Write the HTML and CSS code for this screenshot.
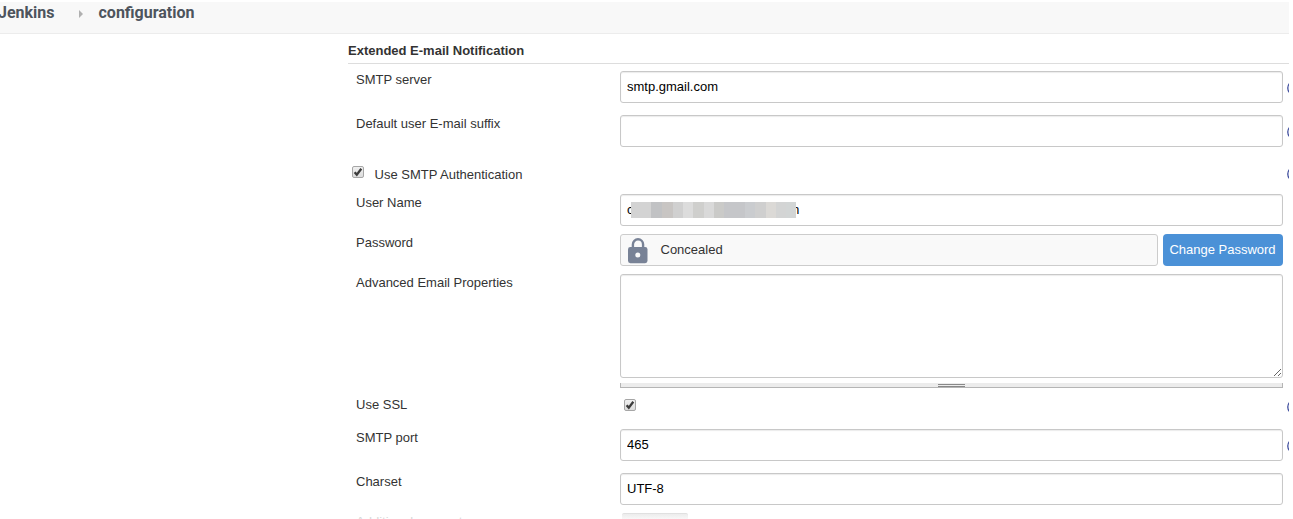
FILE: index.html
```html
<!DOCTYPE html>
<html>
<head>
    <meta charset="utf-8">
    <title>configuration [Jenkins]</title>
    <link rel="stylesheet" href="styles.css">
</head>
<body>
    <svg class="defs">
        <symbol id="help" viewBox="0 0 16 16">
            <circle cx="8" cy="8" r="7.2" fill="#fff" stroke="#3b4a9c" stroke-width="1.3"/>
            <path d="M5.8 6.2a2.2 2.2 0 1 1 3.2 2c-.8.5-1 .8-1 1.6M8 11.2v1.4" fill="none" stroke="#3b4a9c" stroke-width="1.5"/>
        </symbol>
        <symbol id="check" viewBox="0 0 12 12">
            <path d="M2.6 6.2 4.8 8.6 9.3 2.8" fill="none" stroke="#3c3c3c" stroke-width="2.3"/>
        </symbol>
    </svg>
    <div class="page">
        <div class="breadcrumbs">
            <span>Jenkins</span>
            <svg class="arrow" viewBox="0 0 4 8"><path d="M0 0 4 4 0 8z" fill="#b0b0b0"/></svg>
            <span>configuration</span>
        </div>
        <div class="form">
            <h2 class="section-header">Extended E-mail Notification</h2>
            <div class="row">
                <label class="label">SMTP server</label>
                <input class="input" type="text" value="smtp.gmail.com">
                <svg class="help"><use href="#help"/></svg>
            </div>
            <div class="row">
                <label class="label">Default user E-mail suffix</label>
                <input class="input" type="text">
                <svg class="help"><use href="#help"/></svg>
            </div>
            <div class="row auth">
                <span class="checkbox"><svg><use href="#check"/></svg></span>
                <label class="auth-label">Use SMTP Authentication</label>
                <svg class="help"><use href="#help"/></svg>
            </div>
            <div class="row short">
                <label class="label">User Name</label>
                <div class="input masked">
                    <span>c</span><span>m</span>
                    <div class="mosaic"></div>
                </div>
            </div>
            <div class="row short">
                <label class="label">Password</label>
                <div class="concealed">
                    <svg class="lock" viewBox="0 0 20 26">
                        <path d="M4.9 10V6.4a5.1 5.1 0 0 1 10.2 0V10" fill="none" stroke="#788296" stroke-width="2.4"/>
                        <rect y="9" width="19.5" height="16.2" rx="2.4" fill="#788296"/>
                        <circle cx="9.8" cy="17" r="2.5" fill="#f9f9f9"/>
                    </svg>
                    <span>Concealed</span>
                </div>
                <button class="change">Change Password</button>
            </div>
            <div class="row properties">
                <label class="label">Advanced Email Properties</label>
                <div class="area">
                    <textarea class="input"></textarea>
                    <div class="handle"><div class="grip"></div></div>
                </div>
            </div>
            <div class="row ssl">
                <label class="label">Use SSL</label>
                <span class="checkbox"><svg><use href="#check"/></svg></span>
                <svg class="help"><use href="#help"/></svg>
            </div>
            <div class="row">
                <label class="label">SMTP port</label>
                <input class="input" type="text" value="465">
                <svg class="help"><use href="#help"/></svg>
            </div>
            <div class="row short">
                <label class="label">Charset</label>
                <input class="input" type="text" value="UTF-8">
            </div>
            <div class="row faded">
                <label class="label">Additional accounts</label>
                <div class="add"></div>
            </div>
        </div>
    </div>
</body>
</html>
```
FILE: styles.css
```css
* {
    box-sizing: border-box;
}

body {
    margin: 0;
    background: #fff;
    color: #333;
    font: 13px/16px "Liberation Sans", Arial, sans-serif;
    overflow: hidden;
}

.defs {
    display: none;
}

.page {
    width: 1289px;
    height: 519px;
    padding-top: 2px;
    overflow: hidden;
}

.breadcrumbs {
    display: flex;
    height: 32px;
    padding-top: 1px;
    background: #f8f8f8;
    border-bottom: 1px solid #ececec;
    color: #4d545d;
    font: bold 16px/20px Roboto, sans-serif;
}

.breadcrumbs span:first-child {
    margin-left: -2px;
}

.arrow {
    width: 4px;
    height: 8px;
    margin: 7px 16px 0 24px;
}

.form {
    padding-left: 348px;
}

.section-header {
    height: 30px;
    margin: 0 0 7px;
    padding-top: 9px;
    border-bottom: 1px solid #ddd;
    font-size: 13px;
    line-height: 16px;
}

.row {
    display: flex;
    align-items: flex-start;
    height: 44px;
}

.short {
    height: 40px;
}

.label {
    flex: none;
    width: 272px;
    padding: 1px 0 0 8px;
}

.input {
    flex: none;
    width: 663px;
    height: 32px;
    padding: 0 6px 2px;
    background: #fff;
    border: 1px solid #c8c8c8;
    border-radius: 3px;
    box-shadow: inset 0 1px 1px rgba(0, 0, 0, 0.08);
    color: #000;
    font: 13px "Liberation Sans", Arial, sans-serif;
}

.help {
    flex: none;
    width: 16px;
    height: 16px;
    margin: 9px 0 0 4px;
}

.checkbox {
    flex: none;
    width: 12px;
    height: 12px;
    background: linear-gradient(#f0f0f0, #dcdcdc);
    border: 1px solid #a6a6a6;
    border-radius: 2px;
}

.checkbox svg {
    display: block;
    width: 12px;
    height: 12px;
    margin: -1px;
}

.auth {
    height: 35px;
    padding: 7px 0 0 4px;
}

.auth-label {
    flex: none;
    width: 912.5px;
    margin-left: 10.5px;
    padding-top: 1px;
}

.auth .help {
    margin: 0;
}

.masked {
    display: flex;
    position: relative;
    line-height: 30px;
}

.masked span:last-of-type {
    margin-left: 155px;
}

.mosaic {
    position: absolute;
    top: 7px;
    left: 10px;
    width: 165px;
    height: 16px;
    background: linear-gradient(90deg,
        #d3d3d3 0 20px, #c1c2c4 20px 31px, #c8c5c3 31px 42px,
        #d0d0d0 42px 52px, #dcdcdc 52px 62px, #cfcfcd 62px 73px,
        #d9d9d9 73px 83px, #cacac8 83px 93px, #c5c6c9 93px 114px,
        #cacccf 114px 124px, #cfcfcf 124px 135px, #dbd9d6 135px 145px,
        #d3d4d4 145px 155px, #d2d5d5 155px);
}

.concealed {
    display: flex;
    width: 538px;
    height: 32px;
    padding: 3px 7px 0;
    background: #f9f9f9;
    border: 1px solid #ccc;
    border-radius: 3px;
}

.concealed span {
    margin-left: 12.5px;
    padding-top: 4px;
}

.lock {
    width: 20px;
    height: 26px;
}

.change {
    width: 120px;
    height: 32px;
    margin-left: 5px;
    padding: 0 1px 2px 0;
    background: #4b91d7;
    border: none;
    border-radius: 4px;
    color: #fff;
    font: 13px "Liberation Sans", Arial, sans-serif;
}

.properties {
    height: 118px;
}

.area textarea {
    display: block;
    height: 104px;
}

.handle {
    height: 5px;
    margin-top: 5px;
    background: #ececec;
    border: 1px solid #b5b5b5;
    border-top: none;
}

.grip {
    width: 27px;
    height: 3px;
    margin: 0 auto;
    border: solid #888;
    border-width: 1px 0;
    transform: translateY(1px);
}

.ssl {
    height: 37px;
}

.ssl .label {
    padding-top: 5px;
}

.ssl .checkbox {
    margin: 7px 0 0 4px;
}

.ssl .help {
    margin: 7px 0 0 651px;
}

.faded {
    color: #d8d8d8;
}

.add {
    width: 66px;
    height: 22px;
    margin-left: 2px;
    background: linear-gradient(#ececec, #fff 8px);
    border-top: 1px solid #e0e0e0;
    border-radius: 2px;
}
```
